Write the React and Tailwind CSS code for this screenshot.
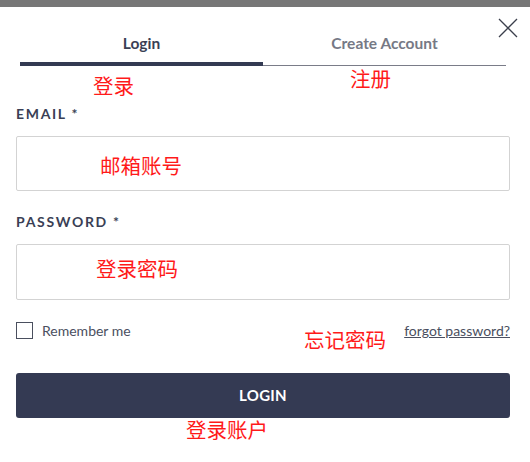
import React from 'react';

const font = { fontFamily: 'Lato, "Open Sans", "Liberation Sans", sans-serif' };
const cjk = 'font-["Noto_Sans_CJK_SC",sans-serif]';

// red handwritten-style notes laid over the form
const Note = ({ className, children }) => (
  <span className={`absolute text-[20.5px] leading-none text-[#ff1a1a] ${cjk} ${className}`}>{children}</span>
);

export default function App() {
  return (
    <div className="w-[530px] h-[462px] bg-white overflow-hidden" style={font}>
      <div className="h-[7px] bg-[#777777]" />
      <div className="relative px-[16px] pr-[20px]">
        {/* close */}
        <button className="absolute right-[12px] top-[11px] text-[#3b3f4c]">
          <svg width="20" height="20" viewBox="0 0 20 20" fill="none" stroke="currentColor" strokeWidth="1.3">
            <path d="M1 1L19 19M19 1L1 19" />
          </svg>
        </button>

        {/* tabs */}
        <div className="flex pl-[4px] pr-[4px] pt-[26px]">
          <div className="flex-1 flex flex-col items-center">
            <span className="text-[15.5px] font-bold text-[#3a3f55] leading-[20px]">Login</span>
            <div className="mt-[9px] w-full h-[4px] bg-[#333a52]" />
          </div>
          <div className="flex-1 flex flex-col items-center">
            <span className="text-[15.5px] font-bold text-[#767985] leading-[20px]">Create Account</span>
            <div className="mt-[12px] w-full h-[1px] bg-[#7a7c88]" />
          </div>
        </div>

        <form className="flex flex-col pt-[40px]">
          <label className="text-[14px] font-bold tracking-[0.12em] text-[#3a3f55] leading-[16px]">EMAIL *</label>
          <input className="mt-[14px] h-[55px] border border-[#d3d3d3] rounded-[2px] outline-none" />

          <label className="mt-[23px] text-[14px] font-bold tracking-[0.12em] text-[#3a3f55] leading-[16px]">PASSWORD *</label>
          <input type="password" className="mt-[14px] h-[56px] border border-[#d3d3d3] rounded-[2px] outline-none" />

          <div className="mt-[20px] flex items-center justify-between">
            <label className="flex items-center gap-[9px]">
              <span className="w-[17px] h-[17px] border border-[#4a4f5e] bg-white" />
              <span className="text-[14px] text-[#4a4f60]">Remember me</span>
            </label>
            <a className="text-[14px] text-[#4a4f60] underline">forgot password?</a>
          </div>

          <button type="button" className="mt-[32px] h-[45px] rounded-[3px] bg-[#343a53] text-white text-[15px] font-bold tracking-[0.02em]">
            LOGIN
          </button>
        </form>

        <Note className="left-[93px] top-[68px]">登录</Note>
        <Note className="left-[350px] top-[61px]">注册</Note>
        <Note className="left-[100px] top-[148px]">邮箱账号</Note>
        <Note className="left-[96px] top-[251px]">登录密码</Note>
        <Note className="left-[304px] top-[322px]">忘记密码</Note>
        <Note className="left-[186px] top-[412px]">登录账户</Note>
      </div>
    </div>
  );
}
